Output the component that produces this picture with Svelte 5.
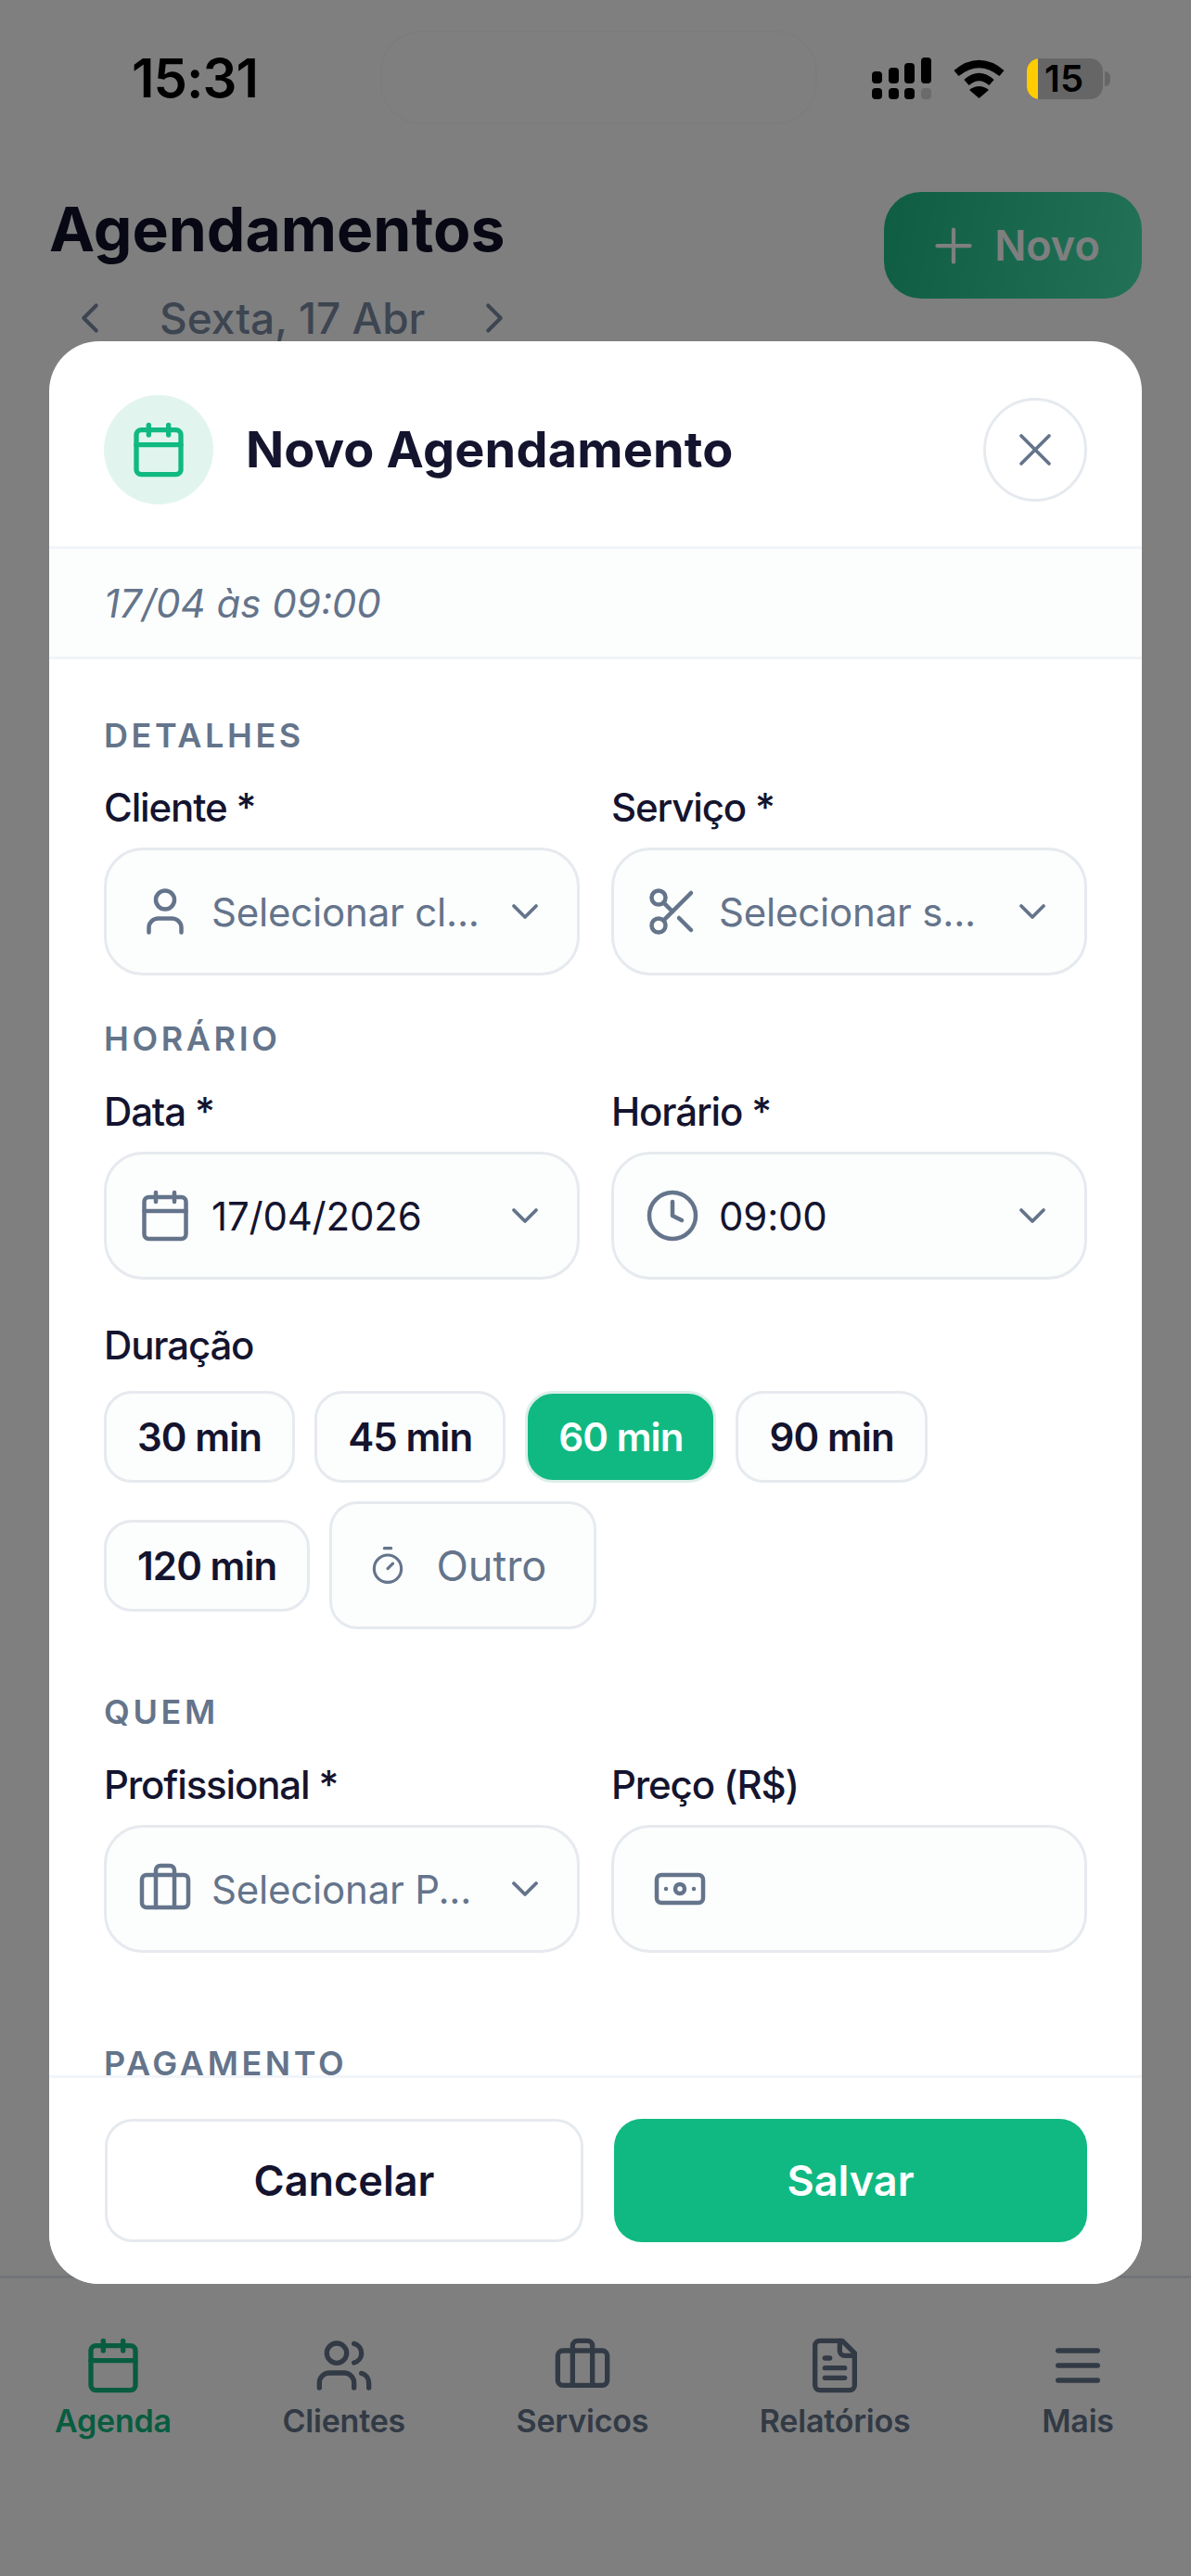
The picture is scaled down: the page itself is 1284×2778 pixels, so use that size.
<script lang="ts">
  const icons: Record<string, string> = {
    calendar: '<path d="M8 2v4"/><path d="M16 2v4"/><rect x="3" y="4" width="18" height="18" rx="2"/><path d="M3 10h18"/>',
    x: '<path d="M18 6 6 18"/><path d="m6 6 12 12"/>',
    plus: '<path d="M5 12h14"/><path d="M12 5v14"/>',
    left: '<path d="m15 18-6-6 6-6"/>',
    right: '<path d="m9 18 6-6-6-6"/>',
    down: '<path d="m6 9 6 6 6-6"/>',
    user: '<path d="M19 21v-2a4 4 0 0 0-4-4H9a4 4 0 0 0-4 4v2"/><circle cx="12" cy="7" r="4"/>',
    users: '<path d="M16 21v-2a4 4 0 0 0-4-4H6a4 4 0 0 0-4 4v2"/><circle cx="9" cy="7" r="4"/><path d="M22 21v-2a4 4 0 0 0-3-3.87"/><path d="M16 3.13a4 4 0 0 1 0 7.75"/>',
    scissors: '<circle cx="6" cy="6" r="3"/><path d="M8.12 8.12 12 12"/><path d="M20 4 8.12 15.88"/><circle cx="6" cy="18" r="3"/><path d="M14.8 14.8 20 20"/>',
    clock: '<circle cx="12" cy="12" r="10"/><polyline points="12 6 12 12 16 14"/>',
    timer: '<line x1="10" x2="14" y1="2" y2="2"/><line x1="12" x2="15" y1="14" y2="11"/><circle cx="12" cy="14" r="8"/>',
    briefcase: '<path d="M16 20V4a2 2 0 0 0-2-2h-4a2 2 0 0 0-2 2v16"/><rect x="2" y="6" width="20" height="14" rx="2"/>',
    banknote: '<rect x="2" y="6" width="20" height="12" rx="2"/><circle cx="12" cy="12" r="2"/><path d="M6 12h.01"/><path d="M18 12h.01"/>',
    file: '<path d="M15 2H6a2 2 0 0 0-2 2v16a2 2 0 0 0 2 2h12a2 2 0 0 0 2-2V7Z"/><path d="M14 2v4a2 2 0 0 0 2 2h4"/><path d="M10 9H8"/><path d="M16 13H8"/><path d="M16 17H8"/>',
    menu: '<path d="M4 6h16"/><path d="M4 12h16"/><path d="M4 18h16"/>'
  };

  const tabs = [
    { label: 'Agenda', icon: 'calendar', active: true },
    { label: 'Clientes', icon: 'users' },
    { label: 'Servicos', icon: 'briefcase' },
    { label: 'Relatórios', icon: 'file' },
    { label: 'Mais', icon: 'menu' }
  ];

  const durations = [30, 45, 60, 90, 120];
  let selected = $state(60);
</script>

{#snippet icon(name: string, size: number, stroke = 2)}
  <svg
    width={size}
    height={size}
    viewBox="0 0 24 24"
    fill="none"
    stroke="currentColor"
    stroke-width={stroke}
    stroke-linecap="round"
    stroke-linejoin="round"
    class="icon"
  >
    {@html icons[name]}
  </svg>
{/snippet}

{#snippet select(name: string, value: string, placeholder: boolean)}
  <div class="input">
    <span class="input-icon">{@render icon(name, 60, 1.8)}</span>
    <span class="input-value" class:placeholder>{value}</span>
    <span class="chev">{@render icon('down', 48, 1.9)}</span>
  </div>
{/snippet}

<div class="page">
  <div class="status">
    <div class="island"></div>
    <span class="time">15:31</span>
    <div class="status-icons">
      <svg width="64" height="45" viewBox="0 0 64 45">
        <rect x="0" y="15" width="11" height="13" rx="4" />
        <rect x="18" y="11" width="11" height="17" rx="4" />
        <rect x="35" y="6" width="11" height="22" rx="4" />
        <rect x="53" y="0" width="11" height="28" rx="4" />
        <rect x="0" y="33" width="11" height="12" rx="4" />
        <rect x="18" y="33" width="11" height="12" rx="4" />
        <rect x="35" y="33" width="11" height="12" rx="4" />
        <rect x="53" y="33" width="11" height="12" rx="4" fill="#6b6b6b" />
      </svg>
      <svg width="55" height="42" viewBox="0 0 55 42">
        <path d="M3 15 Q27.5 -5 52 15" fill="none" stroke="#000" stroke-width="8" />
        <path d="M14 25 Q27.5 13 41 25" fill="none" stroke="#000" stroke-width="8" />
        <path d="M27.5 42 L17 33 Q27.5 25 38 33 Z" />
      </svg>
      <div class="battery">
        <div class="battery-body">
          <span class="battery-level"></span>
          <span class="battery-num">15</span>
        </div>
        <span class="battery-nub"></span>
      </div>
    </div>
  </div>

  <header class="top">
    <div>
      <h1>Agendamentos</h1>
      <div class="date-nav">
        <span class="date-arrow">{@render icon('left', 54, 1.8)}</span>
        <span class="date-label">Sexta, 17 Abr</span>
        <span class="date-arrow">{@render icon('right', 54, 1.8)}</span>
      </div>
    </div>
    <button class="new">{@render icon('plus', 60, 1.7)}<span>Novo</span></button>
  </header>

  <div class="spacer"></div>

  <nav class="tabs">
    {#each tabs as tab}
      <div class="tab" class:active={tab.active}>
        {@render icon(tab.icon, 64)}
        <span>{tab.label}</span>
      </div>
    {/each}
  </nav>

  <div class="overlay">
    <div class="modal">
      <div class="modal-head">
        <div class="badge">{@render icon('calendar', 64)}</div>
        <h2>Novo Agendamento</h2>
        <button class="close">{@render icon('x', 60, 1.5)}</button>
      </div>
      <div class="modal-sub">17/04 às 09:00</div>

      <div class="modal-body">
        <div class="section-title first">DETALHES</div>
        <div class="two">
          <div class="field">
            <span class="label">Cliente *</span>
            {@render select('user', 'Selecionar cl...', true)}
          </div>
          <div class="field">
            <span class="label">Serviço *</span>
            {@render select('scissors', 'Selecionar s...', true)}
          </div>
        </div>

        <div class="section-title horario">HORÁRIO</div>
        <div class="two">
          <div class="field">
            <span class="label">Data *</span>
            {@render select('calendar', '17/04/2026', false)}
          </div>
          <div class="field">
            <span class="label">Horário *</span>
            {@render select('clock', '09:00', false)}
          </div>
        </div>

        <div class="field duration">
          <span class="label">Duração</span>
          <div class="chips">
            {#each durations as d}
              <button class="chip" class:on={selected === d} onclick={() => (selected = d)}>{d} min</button>
            {/each}
            <div class="other">{@render icon('timer', 44, 1.7)}<span>Outro</span></div>
          </div>
        </div>

        <div class="section-title quem">QUEM</div>
        <div class="two">
          <div class="field">
            <span class="label">Profissional *</span>
            {@render select('briefcase', 'Selecionar P...', true)}
          </div>
          <div class="field">
            <span class="label">Preço (R$)</span>
            <div class="input price">
              <span class="input-icon">{@render icon('banknote', 60, 1.8)}</span>
            </div>
          </div>
        </div>

        <div class="section-title pagamento">PAGAMENTO</div>
      </div>

      <div class="modal-foot">
        <button class="btn cancel">Cancelar</button>
        <button class="btn save">Salvar</button>
      </div>
    </div>
  </div>
</div>

<style>
  :global(body) {
    margin: 0;
    background: #fff;
  }

  .page {
    position: relative;
    width: 1284px;
    height: 2778px;
    overflow: hidden;
    display: flex;
    flex-direction: column;
    background: #fff;
    font-family: Inter, 'Noto Sans', sans-serif;
    color: #14142f;
  }

  button {
    font-family: inherit;
    cursor: pointer;
    padding: 0;
  }

  .icon {
    display: block;
    flex: none;
  }

  /* status bar stays above the dimmed layer */
  .status {
    position: relative;
    z-index: 2;
    height: 170px;
    display: flex;
    justify-content: space-between;
    align-items: flex-start;
    padding: 52px 87px 0 142px;
    box-sizing: border-box;
  }

  .island {
    position: absolute;
    left: 410px;
    top: 33px;
    width: 467px;
    height: 97px;
    border-radius: 44px;
    border: 2px solid rgba(0, 0, 0, 0.02);
  }

  .time {
    font-size: 58px;
    font-weight: 600;
    line-height: 65px;
    letter-spacing: -1px;
    color: #000;
  }

  .status-icons {
    display: flex;
    align-items: center;
    gap: 24px;
    margin-top: 10px;
  }

  .battery {
    display: flex;
    align-items: center;
    gap: 2px;
  }

  .battery-body {
    position: relative;
    width: 82px;
    height: 44px;
    border-radius: 14px;
    background: #666;
    overflow: hidden;
    display: flex;
    align-items: center;
  }

  .battery-level {
    width: 12px;
    height: 100%;
    background: #ffcc00;
  }

  .battery-num {
    margin-left: 7px;
    font-size: 40px;
    line-height: 44px;
    font-weight: 600;
    color: #000;
  }

  .battery-nub {
    width: 6px;
    height: 16px;
    border-radius: 0 6px 6px 0;
    background: #666;
  }

  .top {
    display: flex;
    justify-content: space-between;
    align-items: flex-start;
    padding: 37px 53px 0;
  }

  h1 {
    margin: 0;
    font-size: 66px;
    font-weight: 700;
    line-height: 80px;
    color: #10102a;
  }

  .date-nav {
    display: flex;
    align-items: center;
    gap: 48px;
    margin: 28px 0 0 17px;
  }

  .date-label {
    font-size: 46px;
    font-weight: 500;
    color: #7a8aa2;
  }

  .date-arrow {
    color: #7a8aa2;
  }

  .new {
    width: 278px;
    height: 115px;
    border: none;
    border-radius: 40px;
    background: linear-gradient(100deg, #1ebc88, #46e4b0);
    color: #fff;
    display: flex;
    align-items: center;
    justify-content: center;
    gap: 14px;
    font-size: 45px;
    font-weight: 600;
  }

  .spacer {
    flex: 1;
  }

  .tabs {
    height: 324px;
    box-sizing: border-box;
    border-top: 3px solid #e2e8f0;
    display: flex;
    gap: 119.5px;
    padding: 62px 0 0 59px;
  }

  .tab {
    min-width: 122px;
    display: flex;
    flex-direction: column;
    align-items: center;
    gap: 7px;
    color: #64748b;
    font-size: 34px;
    letter-spacing: -0.2px;
    font-weight: 600;
  }

  .tab.active {
    color: #10b981;
  }

  .overlay {
    position: absolute;
    inset: 0;
    z-index: 1;
    background: rgba(0, 0, 0, 0.5);
    padding: 368px 53px 315px;
    box-sizing: border-box;
  }

  .modal {
    height: 100%;
    display: flex;
    flex-direction: column;
    background: #fff;
    border-radius: 54px;
    overflow: hidden;
  }

  .modal-head {
    height: 224px;
    flex: none;
    box-sizing: border-box;
    display: flex;
    align-items: center;
    padding: 12px 59px 0 59px;
    border-bottom: 3px solid #f1f5f9;
  }

  .badge {
    width: 118px;
    height: 118px;
    border-radius: 50%;
    background: #e1f5ee;
    color: #10b981;
    display: flex;
    align-items: center;
    justify-content: center;
    flex: none;
  }

  h2 {
    flex: 1;
    margin: 0 0 0 35px;
    font-size: 54px;
    font-weight: 700;
    letter-spacing: 0.2px;
    color: #14142f;
  }

  .close {
    width: 112px;
    height: 112px;
    border-radius: 50%;
    border: 3px solid #e6eaef;
    background: #fff;
    color: #64748b;
    display: flex;
    align-items: center;
    justify-content: center;
  }

  .modal-sub {
    flex: none;
    height: 119px;
    box-sizing: border-box;
    padding-left: 59px;
    display: flex;
    align-items: center;
    background: #fcfdfd;
    border-bottom: 3px solid #f1f5f9;
    font-size: 42px;
    font-style: italic;
    color: #64748b;
  }

  .modal-body {
    flex: 1;
    min-height: 0;
    overflow: hidden;
    padding: 0 59px;
  }

  .section-title {
    font-size: 36px;
    font-weight: 600;
    line-height: 44px;
    letter-spacing: 3.6px;
    color: #64748b;
  }

  .section-title.first {
    margin: 60px 0 31px;
  }

  .section-title.horario {
    margin: 46px 0 32px;
  }

  .section-title.quem {
    margin: 67px 0 32px;
  }

  .section-title.pagamento {
    margin-top: 97px;
  }

  .two {
    display: grid;
    grid-template-columns: 1fr 1fr;
    gap: 34px;
  }

  .field {
    display: flex;
    flex-direction: column;
    gap: 18px;
    min-width: 0;
  }

  .label {
    font-size: 42px;
    line-height: 50px;
    font-weight: 500;
    letter-spacing: -1.15px;
    color: #14142f;
  }

  .input {
    height: 138px;
    box-sizing: border-box;
    border: 3px solid #e6eaef;
    border-radius: 42px;
    background: #fcfdfd;
    display: flex;
    align-items: center;
    padding: 0 32px 0 33px;
  }

  .input.price {
    padding-left: 41px;
  }

  .input-icon {
    color: #64748b;
    margin-right: 20px;
  }

  .input-value {
    flex: 1;
    min-width: 0;
    white-space: nowrap;
    font-size: 42px;
    letter-spacing: -0.2px;
    color: #14142f;
  }

  .input-value.placeholder {
    color: #64748b;
  }

  .chev {
    color: #64748b;
  }

  .duration {
    margin-top: 46px;
    gap: 24px;
  }

  .chips {
    display: flex;
    flex-wrap: wrap;
    align-items: center;
    gap: 20px 21px;
  }

  .chip {
    height: 99px;
    padding: 0 33px;
    box-sizing: border-box;
    border: 3px solid #e6eaef;
    border-radius: 30px;
    background: #fcfdfd;
    color: #14142f;
    font-size: 42px;
    font-weight: 600;
    letter-spacing: -0.9px;
  }

  .chip.on {
    background: #10b981;
    color: #fff;
    border-color: #dcefe9;
  }

  .other {
    width: 288px;
    height: 138px;
    box-sizing: border-box;
    border: 3px solid #e6eaef;
    border-radius: 30px;
    background: #fcfdfd;
    color: #64748b;
    display: flex;
    align-items: center;
    gap: 30px;
    padding-left: 38px;
    font-size: 45px;
  }

  .modal-foot {
    flex: none;
    height: 225px;
    box-sizing: border-box;
    border-top: 3px solid #f1f5f9;
    background: #fff;
    display: flex;
    gap: 33px;
    padding: 44px 59px 0 60px;
  }

  .btn {
    flex: 1;
    height: 133px;
    box-sizing: border-box;
    border-radius: 30px;
    font-size: 45px;
    font-weight: 600;
  }

  .cancel {
    background: #fff;
    border: 3px solid #e6eaef;
    color: #14142f;
  }

  .save {
    background: #10b981;
    border: none;
    color: #fff;
  }
</style>
